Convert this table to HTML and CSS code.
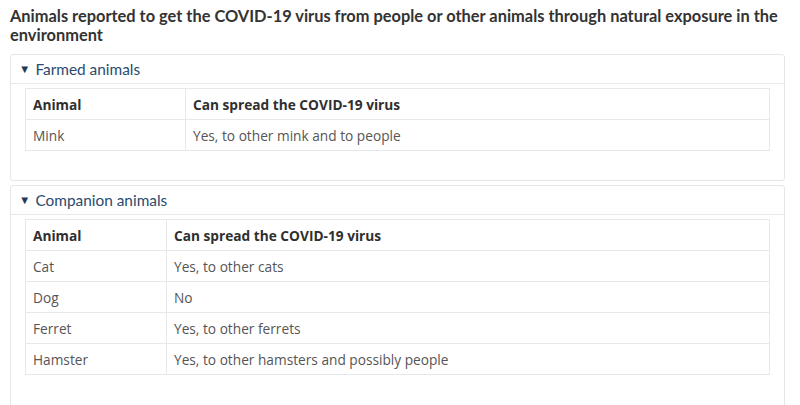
FILE: index.html
```html
<!DOCTYPE html>
<html>
<head>
<meta charset="utf-8">
<link rel="stylesheet" href="styles.css">
</head>
<body>
<div class="page">
  <h1 class="title">Animals reported to get the COVID-19 virus from people or other animals through natural exposure in the environment</h1>
  <section class="panel panel-farm">
    <div class="panel-head"><span class="caret">&#9660;</span>Farmed animals</div>
    <div class="panel-body">
      <table class="grid grid-farm">
        <thead><tr><th class="c1">Animal</th><th>Can spread the COVID-19 virus</th></tr></thead>
        <tbody><tr><td>Mink</td><td>Yes, to other mink and to people</td></tr></tbody>
      </table>
    </div>
  </section>
  <section class="panel panel-comp">
    <div class="panel-head"><span class="caret">&#9660;</span>Companion animals</div>
    <div class="panel-body">
      <table class="grid grid-comp">
        <thead><tr><th class="c1">Animal</th><th>Can spread the COVID-19 virus</th></tr></thead>
        <tbody>
          <tr><td>Cat</td><td>Yes, to other cats</td></tr>
          <tr><td>Dog</td><td>No</td></tr>
          <tr><td>Ferret</td><td>Yes, to other ferrets</td></tr>
          <tr><td>Hamster</td><td>Yes, to other hamsters and possibly people</td></tr>
        </tbody>
      </table>
    </div>
  </section>
</div>
</body>
</html>
```
FILE: styles.css
```css
html, body { margin: 0; padding: 0; background: #fff; }
.page { padding: 6px 15px 0 10px; }
.title {
  font-family: Lato, "Liberation Sans", sans-serif;
  font-weight: 700;
  font-size: 16.4px;
  line-height: 19px;
  color: #333;
  margin: 0 0 10px 0;
}
.panel {
  border: 1px solid #e6e6e6;
  border-radius: 3px;
  margin-bottom: 4px;
}
.panel-head {
  font-family: Lato, "Liberation Sans", sans-serif;
  font-size: 15.4px;
  color: #2a4b6e;
  height: 28px;
  line-height: 28px;
  padding-left: 8px;
  border-bottom: 1px solid #e9e9e9;
}
.caret { font-size: 11.5px; color: #1d3a5c; margin-right: 5px; position: relative; top: -2px; }
.panel-body { padding: 4px 14px 29px 14px; }
.panel-comp .panel-body { padding-bottom: 40px; }
.grid {
  width: 100%;
  border-collapse: collapse;
  font-family: "Open Sans", "Liberation Sans", sans-serif;
  font-size: 13.7px;
  color: #555;
}
.grid th, .grid td {
  border: 1px solid #e8e8e8;
  text-align: left;
  padding: 0 7px;
  height: 30px;
}
.grid th { font-weight: 700; color: #2f2f2f; }
.grid-farm .c1 { width: 145px; }
.grid-comp .c1 { width: 126px; }
```
